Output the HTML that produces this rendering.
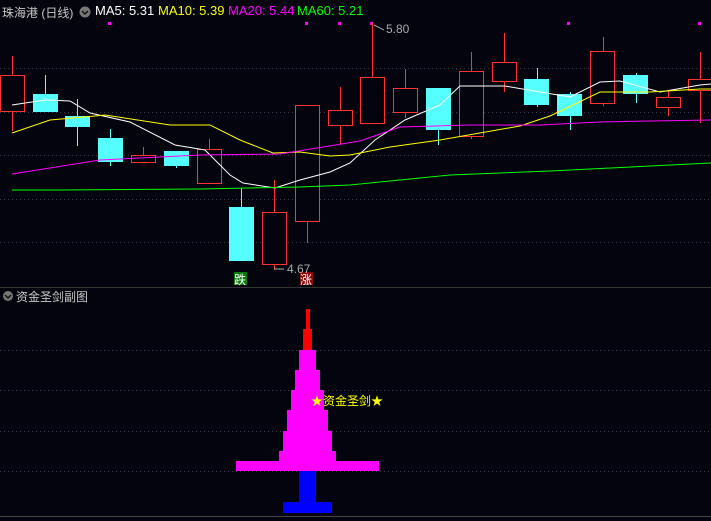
<!DOCTYPE html><html><head><meta charset="utf-8"><style>
body{margin:0;width:711px;height:521px;background:#04040e;overflow:hidden;position:relative;font-family:"Liberation Sans","Noto Sans CJK SC",sans-serif}
.t{position:absolute;font-size:13px;white-space:nowrap}
</style></head><body>
<svg width="711" height="521" style="position:absolute;left:0;top:0">
<g stroke="#3a3a46" stroke-dasharray="1 3" stroke-width="1">
<line x1="0" y1="68.5" x2="711" y2="68.5"/><line x1="0" y1="112.5" x2="711" y2="112.5"/><line x1="0" y1="155.5" x2="711" y2="155.5"/><line x1="0" y1="199.5" x2="711" y2="199.5"/><line x1="0" y1="242.5" x2="711" y2="242.5"/>
<line x1="0" y1="350.5" x2="711" y2="350.5"/><line x1="0" y1="390.5" x2="711" y2="390.5"/><line x1="0" y1="431.5" x2="711" y2="431.5"/><line x1="0" y1="471.5" x2="711" y2="471.5"/>
</g>
<line x1="0" y1="287.5" x2="711" y2="287.5" stroke="#333"/>
<line x1="0" y1="516.5" x2="711" y2="516.5" stroke="#444"/>
<g fill="#f0f">
<rect x="108" y="22" width="3" height="3"/><rect x="305" y="22" width="3" height="3"/><rect x="338" y="22" width="3" height="3"/><rect x="370" y="22" width="3" height="3"/><rect x="567" y="22" width="3" height="3"/><rect x="698" y="22" width="3" height="3"/>
</g>
<g stroke="#ff3333" fill="none" stroke-width="1">
<line x1="12.5" y1="56" x2="12.5" y2="131"/><rect x="0.5" y="75.5" width="24" height="36" fill="#04040e"/>
<line x1="143.5" y1="147" x2="143.5" y2="163"/><rect x="131.5" y="155.5" width="24" height="7" fill="#04040e"/>
<line x1="209.5" y1="139" x2="209.5" y2="184"/><rect x="197.5" y="149.5" width="24" height="34" fill="#04040e"/>
<line x1="274.5" y1="180" x2="274.5" y2="270"/><rect x="262.5" y="212.5" width="24" height="52" fill="#04040e"/>
<line x1="307.5" y1="105" x2="307.5" y2="243"/><rect x="295.5" y="105.5" width="24" height="116" fill="#04040e"/>
<line x1="340.5" y1="87" x2="340.5" y2="144"/><rect x="328.5" y="110.5" width="24" height="15" fill="#04040e"/>
<line x1="372.5" y1="23" x2="372.5" y2="123"/><rect x="360.5" y="77.5" width="24" height="46" fill="#04040e"/>
<line x1="405.5" y1="69" x2="405.5" y2="118"/><rect x="393.5" y="88.5" width="24" height="24" fill="#04040e"/>
<line x1="471.5" y1="52" x2="471.5" y2="139"/><rect x="459.5" y="71.5" width="24" height="65" fill="#04040e"/>
<line x1="504.5" y1="33" x2="504.5" y2="92"/><rect x="492.5" y="62.5" width="24" height="19" fill="#04040e"/>
<line x1="603.5" y1="37" x2="603.5" y2="106"/><rect x="590.5" y="51.5" width="24" height="52" fill="#04040e"/>
<line x1="668.5" y1="91" x2="668.5" y2="116"/><rect x="656.5" y="97.5" width="24" height="10" fill="#04040e"/>
<line x1="700.5" y1="52" x2="700.5" y2="123"/><rect x="688.5" y="79.5" width="30" height="11" fill="#04040e"/>
</g>
<g stroke="#55ffff" fill="#55ffff">
<line x1="45.5" y1="75" x2="45.5" y2="112"/><rect x="33" y="94" width="25" height="18" stroke="none"/>
<line x1="77.5" y1="99" x2="77.5" y2="146"/><rect x="65" y="116" width="25" height="11" stroke="none"/>
<line x1="110.5" y1="129" x2="110.5" y2="166"/><rect x="98" y="138" width="25" height="24" stroke="none"/>
<line x1="176.5" y1="151" x2="176.5" y2="168"/><rect x="164" y="151" width="25" height="15" stroke="none"/>
<line x1="241.5" y1="188" x2="241.5" y2="261"/><rect x="229" y="207" width="25" height="54" stroke="none"/>
<line x1="438.5" y1="88" x2="438.5" y2="145"/><rect x="426" y="88" width="25" height="42" stroke="none"/>
<line x1="537.5" y1="68" x2="537.5" y2="107"/><rect x="524" y="79" width="25" height="26" stroke="none"/>
<line x1="570.5" y1="92" x2="570.5" y2="130"/><rect x="557" y="94" width="25" height="22" stroke="none"/>
<line x1="636.5" y1="73" x2="636.5" y2="103"/><rect x="623" y="75" width="25" height="19" stroke="none"/>
</g>
<g fill="none" stroke-width="1">
<polyline stroke="#fff" points="12,105 45,100 70,101 90,113 130,122 175,145 205,150 230,175 243,183 275,188 300,180 330,172 350,163 375,140 405,120 440,105 460,86 505,86 540,92 570,97 600,82 620,81 660,92 700,85 711,84"/>
<polyline stroke="#ffff00" points="12,133 50,120 95,116 105,115 170,125 210,125 240,140 273,153 300,152 330,156 350,155 390,147 440,140 520,126 550,116 600,92 650,92 700,89 711,89"/>
<polyline stroke="#ff00ff" points="12,174 100,160 200,155 280,154 360,141 400,127 470,125 540,125 600,122 650,121 711,120"/>
<polyline stroke="#00ff00" points="12,190 60,190 200,189 300,187 350,185 400,180 450,175 550,171 650,166 711,163"/>
</g>
<line x1="274" y1="269" x2="284" y2="269" stroke="#aaa"/>
<line x1="374" y1="25" x2="384" y2="30" stroke="#aaa"/>
<rect x="234" y="272" width="13" height="13" fill="#0a7a0a"/>
<rect x="300" y="272" width="13" height="13" fill="#8a0a0a"/>
<rect x="306" y="309" width="4" height="20" fill="#f00"/>
<rect x="303" y="329" width="9" height="21" fill="#f00"/>
<g fill="#f0f">
<rect x="299" y="350" width="17" height="21"/><rect x="295" y="370" width="25" height="21"/><rect x="291" y="390" width="33" height="21"/><rect x="287" y="410" width="41" height="21"/><rect x="283" y="431" width="49" height="21"/><rect x="279" y="451" width="57" height="11"/><rect x="236" y="461" width="143" height="10"/>
</g>
<rect x="299" y="471" width="17" height="32" fill="#00f"/>
<rect x="283" y="502" width="49" height="11" fill="#00f"/>
<circle cx="85" cy="12" r="5.5" fill="#777"/><polyline points="82,11 85,14 88,11" stroke="#111" fill="none" stroke-width="1.5"/>
<circle cx="8" cy="296" r="5" fill="#777"/><polyline points="5,295 8,298 11,295" stroke="#111" fill="none" stroke-width="1.5"/>
</svg>
<div class="t" style="left:2px;top:4px;color:#c8c8c8;font-size:12px">珠海港 (日线)</div>
<div class="t" style="left:95px;top:3px;color:#fff">MA5: 5.31</div>
<div class="t" style="left:158px;top:3px;color:#ff0">MA10: 5.39</div>
<div class="t" style="left:228px;top:3px;color:#f0f">MA20: 5.44</div>
<div class="t" style="left:297px;top:3px;color:#0f0">MA60: 5.21</div>
<div class="t" style="left:386px;top:22px;color:#aaa;font-size:12px">5.80</div>
<div class="t" style="left:287px;top:262px;color:#aaa;font-size:12px">4.67</div>
<div class="t" style="left:234px;top:271px;color:#fff;font-size:12px">跌</div>
<div class="t" style="left:300px;top:271px;color:#fff;font-size:12px">涨</div>
<div class="t" style="left:16px;top:288px;color:#c8c8c8;font-size:12px">资金圣剑副图</div>
<div class="t" style="left:311px;top:392px;color:#ff0;font-size:12px">★资金圣剑★</div>
</body></html>
